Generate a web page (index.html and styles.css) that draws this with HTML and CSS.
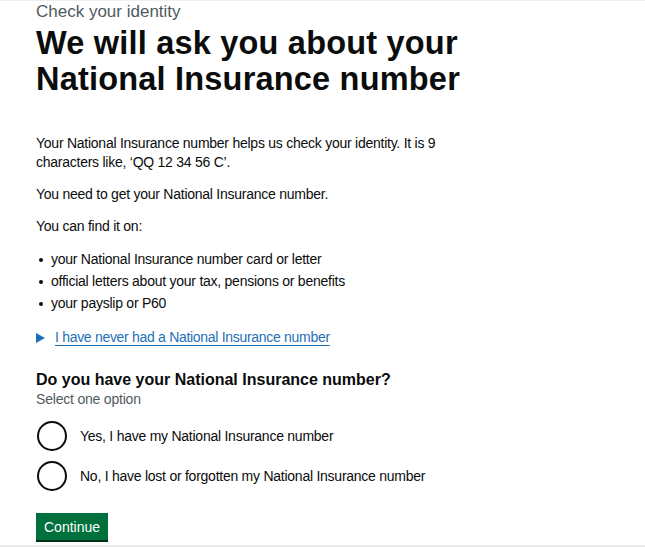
FILE: index.html
```html
<!DOCTYPE html>
<html lang="en">
<head>
<meta charset="utf-8">
<title>Check your identity</title>
<link rel="stylesheet" href="styles.css">
</head>
<body>
<div class="page">
  <main class="main">
    <span class="caption">Check your identity</span>
    <h1 class="heading">We will ask you about your National Insurance number</h1>
    <p class="body">Your National Insurance number helps us check your identity. It is 9 characters like, ‘QQ 12 34 56 C’.</p>
    <p class="body">You need to get your National Insurance number.</p>
    <p class="body">You can find it on:</p>
    <ul class="list">
      <li>your National Insurance number card or letter</li>
      <li>official letters about your tax, pensions or benefits</li>
      <li>your payslip or P60</li>
    </ul>
    <details class="details">
      <summary class="summary">
        <svg class="arrow" width="9" height="10" viewBox="0 0 9 10" aria-hidden="true"><polygon points="0,0 9,5 0,10" fill="#1d70b8"/></svg>
        <span class="summary-text">I have never had a National Insurance number</span>
      </summary>
    </details>
    <fieldset class="fieldset">
      <legend class="legend">Do you have your National Insurance number?</legend>
      <div class="hint">Select one option</div>
      <div class="radios">
        <label class="radio"><span class="radio-circle"></span><span class="radio-label">Yes, I have my National Insurance number</span></label>
        <label class="radio"><span class="radio-circle"></span><span class="radio-label">No, I have lost or forgotten my National Insurance number</span></label>
      </div>
    </fieldset>
    <button class="button" type="button">Continue</button>
  </main>
</div>
</body>
</html>
```
FILE: styles.css
```css
html, body {
  margin: 0;
  padding: 0;
  background: #ffffff;
}
body {
  font-family: "Liberation Sans", Arial, sans-serif;
  color: #0b0c0c;
}
.page {
  box-sizing: border-box;
  height: 547px;
  border-top: 1px solid #f0f0f0;
  border-bottom: 2px solid #ebebeb;
  overflow: hidden;
}
.main {
  display: flex;
  flex-direction: column;
  align-items: flex-start;
  padding-top: 1px;
  padding-left: 36px;
}
.caption {
  font-size: 17px;
  line-height: 20px;
  color: #505a5f;
}
.heading {
  margin: 3px 0 0;
  font-size: 32.5px;
  line-height: 36px;
  font-weight: 700;
  letter-spacing: 0.2px;
  width: 480px;
}
.body {
  margin: 0 0 13px;
  font-size: 14px;
  line-height: 19px;
  letter-spacing: -0.25px;
  width: 420px;
}
.heading + .body {
  margin-top: 37px;
}
.list {
  margin: 1px 0 15px;
  padding-left: 15px;
  font-size: 14px;
  line-height: 19px;
  letter-spacing: -0.25px;
  list-style: none;
}
.list li {
  position: relative;
  margin-bottom: 3px;
}
.list li:last-child {
  margin-bottom: 0;
}
.list li::before {
  content: "";
  position: absolute;
  left: -12px;
  top: 8px;
  width: 4px;
  height: 4px;
  border-radius: 50%;
  background: #0b0c0c;
}
.details {
  margin: 0;
}
.summary {
  display: flex;
  align-items: center;
  gap: 10px;
  list-style: none;
  font-size: 14px;
  line-height: 19px;
  letter-spacing: -0.3px;
  color: #1d70b8;
  cursor: pointer;
}
.summary::-webkit-details-marker {
  display: none;
}
.arrow {
  display: block;
}
.summary-text {
  text-decoration: underline;
  text-decoration-thickness: 1px;
  text-underline-offset: 3px;
}
.fieldset {
  margin: 23px 0 0;
  padding: 0;
  border: 0;
  min-width: 0;
}
.legend {
  padding: 0;
  font-size: 16px;
  line-height: 20px;
  font-weight: 700;
  letter-spacing: 0;
}
.hint {
  font-size: 14px;
  line-height: 19px;
  letter-spacing: -0.2px;
  color: #505a5f;
}
.radios {
  display: flex;
  flex-direction: column;
  gap: 10px;
  margin-top: 12px;
}
.radio {
  display: flex;
  align-items: center;
  gap: 13px;
  height: 30px;
  font-size: 14px;
  letter-spacing: -0.25px;
  cursor: pointer;
}
.radio-circle {
  box-sizing: border-box;
  width: 30px;
  height: 30px;
  margin-left: 1px;
  border: 2px solid #0b0c0c;
  border-radius: 50%;
  background: #ffffff;
  flex: none;
}
.button {
  margin-top: 22px;
  padding: 5px 8px 3px;
  border: 0;
  border-radius: 0;
  background: #00703c;
  box-shadow: 0 2px 0 #002d18;
  color: #ffffff;
  font-family: "Liberation Sans", Arial, sans-serif;
  font-size: 14px;
  line-height: 19px;
  cursor: pointer;
}
```
